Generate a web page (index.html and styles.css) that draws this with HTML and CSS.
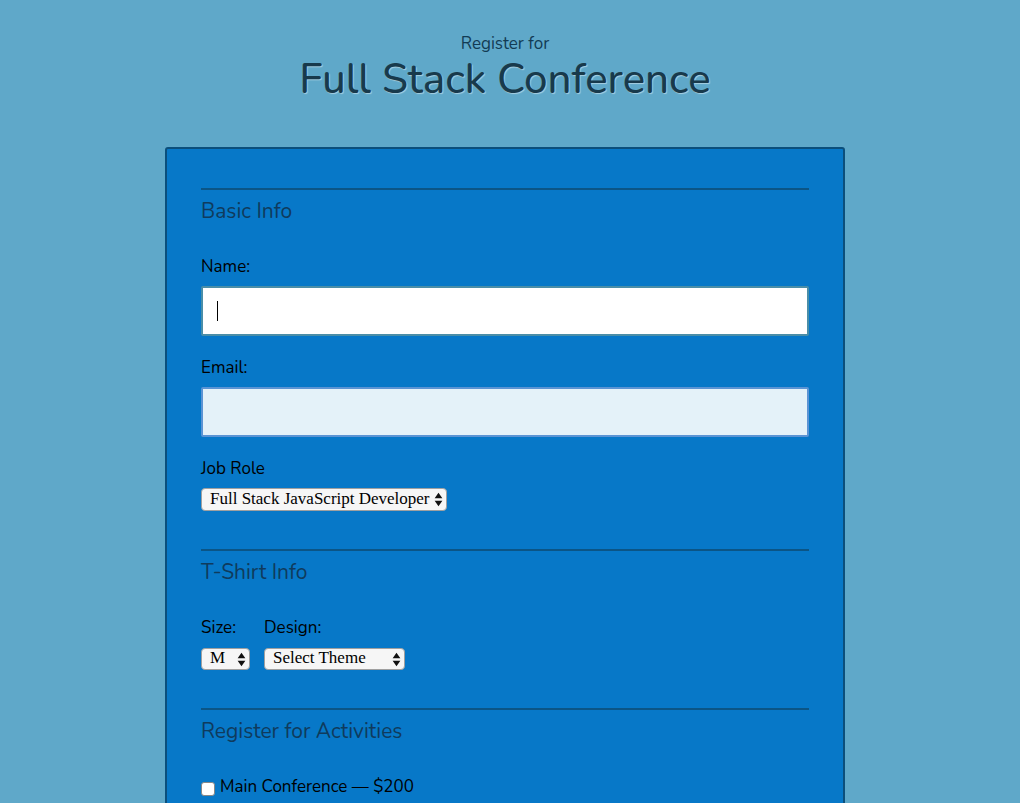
FILE: index.html
```html
<!DOCTYPE html>
<html>
<head>
<meta charset="utf-8">
<link rel="stylesheet" href="styles.css">
</head>
<body>
<div class="page">
<header class="header">
  <span class="pre">Register for</span>
  <h1 class="title">Full Stack Conference</h1>
</header>
<form class="card">
  <section class="section">
    <div class="legend">Basic Info</div>
    <label class="label first">Name:</label>
    <div class="input name"><span class="caret"></span></div>
    <label class="label">Email:</label>
    <div class="input email"></div>
    <label class="label">Job Role</label>
    <div class="select job"><span>Full Stack JavaScript Developer</span><svg class="arrows" viewBox="0 0 8 14" width="9" height="15"><path d="M4 0.8 L7.6 5.8 H0.4 Z M4 13.2 L7.6 8.2 H0.4 Z" fill="#111"/></svg></div>
  </section>
  <section class="section">
    <div class="legend">T-Shirt Info</div>
    <div class="shirt">
      <div class="col">
        <label class="label first">Size:</label>
        <div class="select size"><span>M</span><svg class="arrows" viewBox="0 0 8 14" width="9" height="15"><path d="M4 0.8 L7.6 5.8 H0.4 Z M4 13.2 L7.6 8.2 H0.4 Z" fill="#111"/></svg></div>
      </div>
      <div class="col">
        <label class="label first">Design:</label>
        <div class="select design"><span>Select Theme</span><svg class="arrows" viewBox="0 0 8 14" width="9" height="15"><path d="M4 0.8 L7.6 5.8 H0.4 Z M4 13.2 L7.6 8.2 H0.4 Z" fill="#111"/></svg></div>
      </div>
    </div>
  </section>
  <section class="section">
    <div class="legend">Register for Activities</div>
    <label class="check"><span class="box"></span>Main Conference — $200</label>
  </section>
</form>
</div>
</body>
</html>
```
FILE: styles.css
```css
html, body {
  margin: 0;
  padding: 0;
}
body {
  background: #5fa8c9;
  font-family: "Nunito", "Noto Sans", "Open Sans", sans-serif;
  color: #000;
  height: 803px;
  overflow: hidden;
}
.page {
  width: 1010px;
}
.header {
  display: flex;
  flex-direction: column;
  align-items: center;
  padding-top: 34px;
}
.pre {
  font-size: 17px;
  line-height: 20px;
  color: #123b54;
}
.title {
  margin: 4px 0 0;
  font-size: 42px;
  line-height: 44px;
  font-weight: 500;
  color: #183a4c;
  text-shadow: 1px 1px 1px rgba(255, 255, 255, 0.45);
}
.card {
  display: block;
  width: 608px;
  margin: 45px auto 0;
  padding: 39px 34px 40px;
  background: #0778c8;
  border: 2px solid #0b4f7c;
  border-radius: 3px;
}
.section {
  border-top: 2px solid #0b5586;
  display: flex;
  flex-direction: column;
  align-items: flex-start;
  margin-bottom: 38px;
}
.legend {
  margin-top: 9px;
  font-size: 21px;
  line-height: 25px;
  color: #0f3b5d;
}
.label {
  display: block;
  font-size: 17px;
  line-height: 20px;
  margin-top: 22px;
}
.label.first {
  margin-top: 33px;
}
.input {
  box-sizing: border-box;
  width: 608px;
  height: 50px;
  margin-top: 9px;
  border-radius: 2px;
  display: flex;
  align-items: center;
}
.input.name {
  background: #fff;
  border: 2px solid #4a8ea8;
}
.input.email {
  background: #e4f2f9;
  border: 2px solid #5b94d4;
}
.caret {
  width: 1px;
  height: 20px;
  background: #000;
  margin-left: 14px;
}
.select {
  box-sizing: border-box;
  margin-top: 9px;
  height: 23px;
  background: #f6f6f6;
  border: 1px solid #a0a0a0;
  border-radius: 4px;
  display: flex;
  align-items: center;
  justify-content: space-between;
  padding: 0 3px 3px 8px;
  font-family: "Liberation Serif", "Times New Roman", serif;
  font-size: 17px;
  line-height: 19px;
  color: #000;
}
.select .arrows {
  flex: none;
  margin-top: 3px;
}
.select.job { width: 246px; }
.select.size { width: 49px; margin-top: 10px; height: 22px; }
.select.design { width: 141px; margin-top: 10px; height: 22px; }
.shirt {
  display: flex;
  gap: 14px;
}
.col {
  display: flex;
  flex-direction: column;
}
.check {
  margin-top: 33px;
  display: flex;
  align-items: center;
  font-size: 17px;
  line-height: 20px;
}
.box {
  box-sizing: border-box;
  width: 14px;
  height: 14px;
  background: #fff;
  border: 1px solid #888;
  border-radius: 3px;
  margin-right: 5px;
  margin-top: 4px;
}
```
